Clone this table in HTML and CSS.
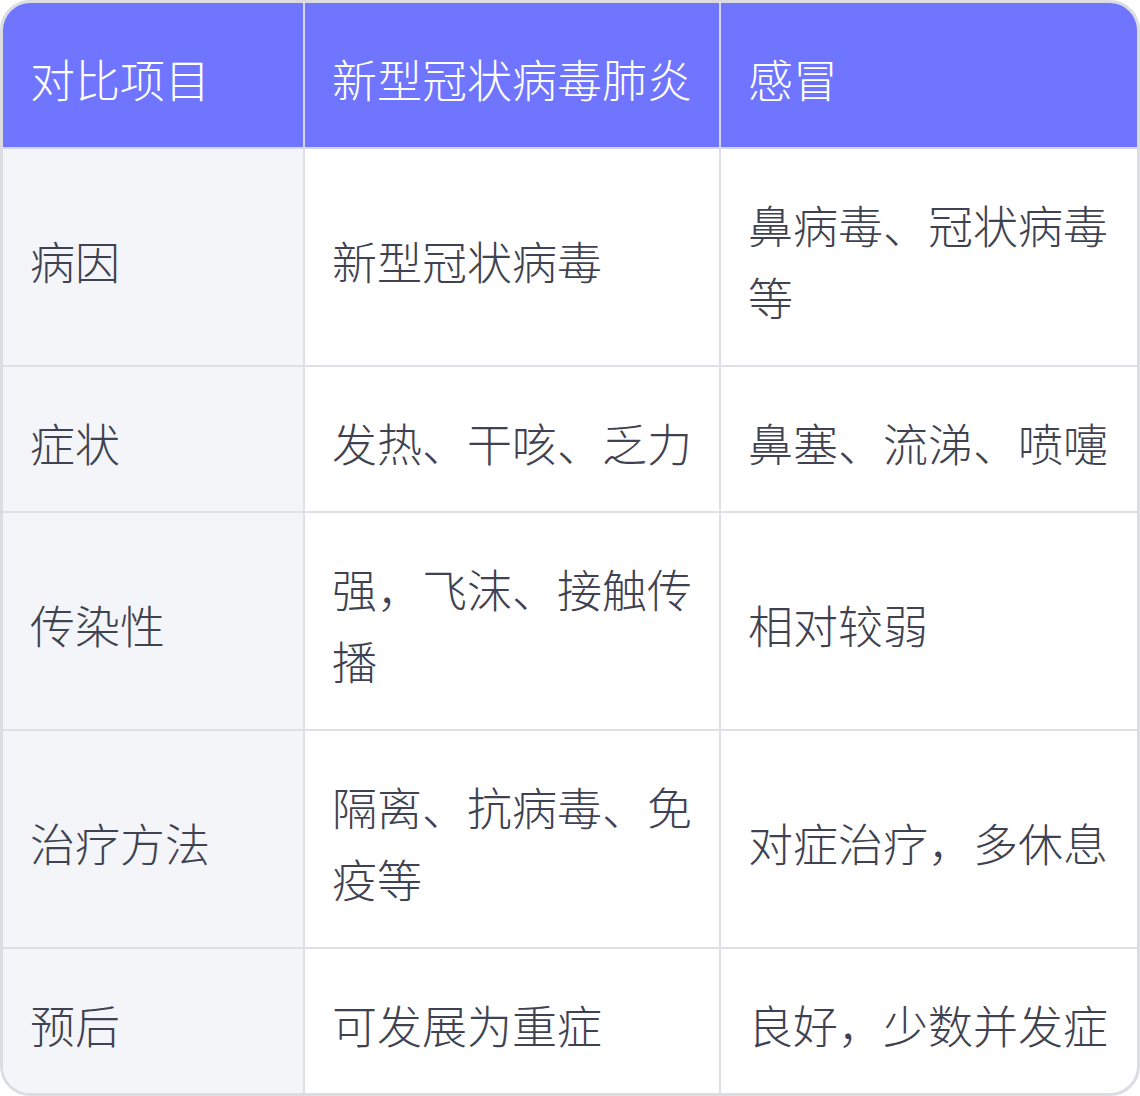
FILE: index.html
```html
<!DOCTYPE html>
<html lang="zh-CN">
<head>
<meta charset="utf-8">
<title>新型冠状病毒肺炎与感冒对比</title>
<link rel="stylesheet" href="styles.css">
</head>
<body>
<div class="card">
  <table class="cmp">
    <colgroup>
      <col class="c1">
      <col class="c2">
      <col class="c3">
    </colgroup>
    <thead>
      <tr>
        <th>对比项目</th>
        <th>新型冠状病毒肺炎</th>
        <th>感冒</th>
      </tr>
    </thead>
    <tbody>
      <tr>
        <td class="item">病因</td>
        <td>新型冠状病毒</td>
        <td>鼻病毒、冠状病毒等</td>
      </tr>
      <tr>
        <td class="item">症状</td>
        <td>发热、干咳、乏力</td>
        <td>鼻塞、流涕、喷嚏</td>
      </tr>
      <tr>
        <td class="item">传染性</td>
        <td>强，飞沫、接触传播</td>
        <td>相对较弱</td>
      </tr>
      <tr>
        <td class="item">治疗方法</td>
        <td>隔离、抗病毒、免疫等</td>
        <td>对症治疗，多休息</td>
      </tr>
      <tr>
        <td class="item">预后</td>
        <td>可发展为重症</td>
        <td>良好，少数并发症</td>
      </tr>
    </tbody>
  </table>
</div>
</body>
</html>
```
FILE: styles.css
```css
html, body {
  margin: 0;
  padding: 0;
  background: #ffffff;
}

.card {
  width: 1140px;
  height: 1096px;
  box-sizing: border-box;
  border: 3px solid #dcdde2;
  border-radius: 30px;
  overflow: hidden;
  background: #ffffff;
}

.cmp {
  width: 100%;
  table-layout: fixed;
  border-collapse: collapse;
  font-family: "Noto Sans CJK SC", "Noto Sans", sans-serif;
  font-size: 45px;
  line-height: 72px;
  color: #3f4251;
}

.c1 { width: 301px; }
.c2 { width: 416px; }
.c3 { width: 417px; }

.cmp th,
.cmp td {
  padding: 40px 27px 32px;
  border: 2px solid #dfe0e6;
  text-align: left;
  vertical-align: middle;
  font-weight: 300;
}

.cmp th {
  background: #7075ff;
  color: #ffffff;
  border-top: none;
  border-color: #d4d6ef;
}

.cmp tr > :first-child { border-left: none; }
.cmp tr > :last-child { border-right: none; }
.cmp tbody tr:last-child td { border-bottom: none; }

.cmp td.item {
  background: #f4f5f9;
}
```
